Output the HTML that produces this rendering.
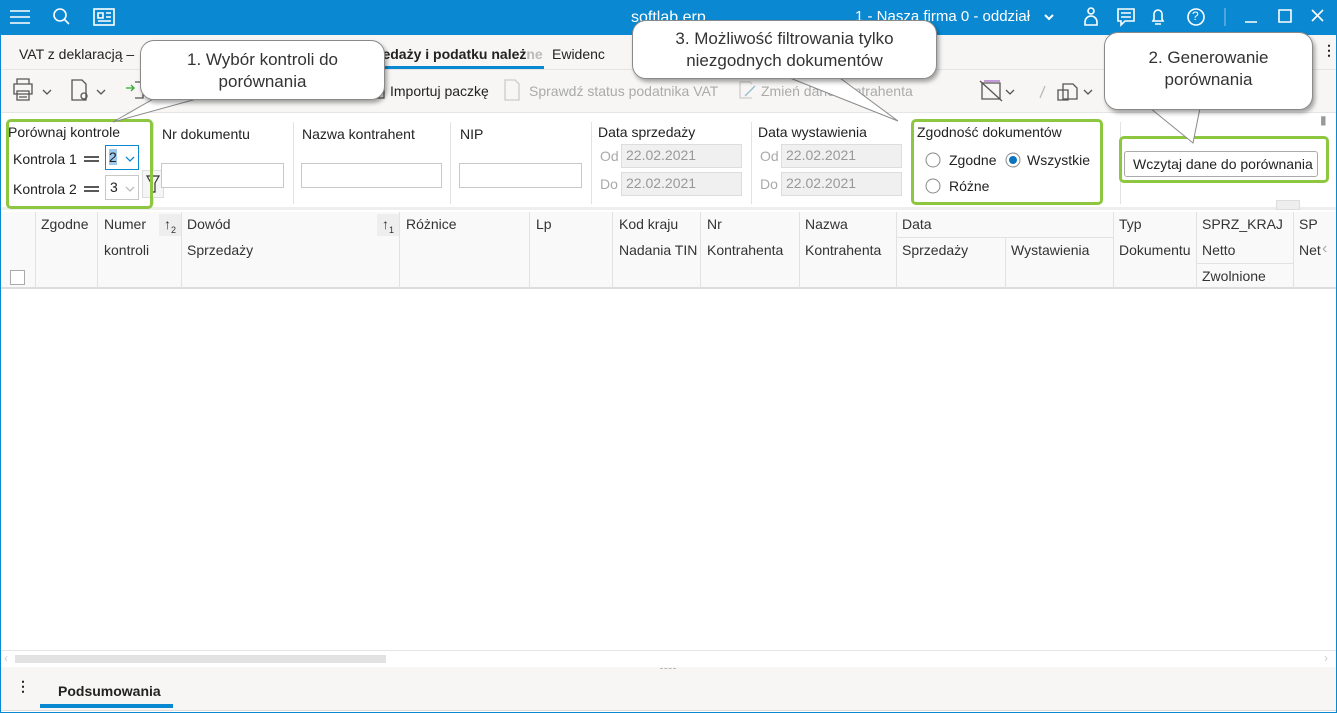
<!DOCTYPE html>
<html><head><meta charset="utf-8"><style>
*{box-sizing:border-box;margin:0;padding:0}
body{width:1337px;height:713px;overflow:hidden;background:#fff;font-family:"Liberation Sans Narrow","Liberation Sans",sans-serif;font-size:14px;color:#222;position:relative}
.a{position:absolute;white-space:nowrap}
.g{color:#aaa}
.inp{position:absolute;border:1px solid #c8c8c8;background:#fff}
.dis{position:absolute;border:1px solid #ddd;background:#f0f0f0;color:#999;padding:2px 4px;font-size:14px}
.green{position:absolute;border:3px solid #8dc63f;border-radius:5px}
.call{position:absolute;background:#fff;border:1px solid #8a8a8a;border-radius:14px;box-shadow:2px 3px 4px rgba(0,0,0,.35);text-align:center;font-family:"Liberation Sans",sans-serif;font-size:17px;color:#333;line-height:22px}
.hd{position:absolute;font-size:14px;color:#333}
.vl{position:absolute;width:1px;background:#e2e2e2}
</style></head><body>
<div class="a" style="left:0;top:0;width:1337px;height:35px;background:#0a89d2"></div>
<svg class="a" style="left:0;top:0" width="1337" height="35" fill="none" stroke="#fff" stroke-width="1.6">
<path d="M10 11h20M10 17h20M10 23h20"/>
<circle cx="60" cy="15" r="6"/><path d="M64 19l5 5"/>
<rect x="94" y="9" width="20" height="16"/><path d="M98 13h5v5h-5zM106 13h5M106 17h5M98 21h13"/>
<path d="M1045 15l4 4 4-4" stroke-width="2"/>
<circle cx="1091" cy="11" r="3"/><path d="M1085 25v-3a6 6 0 0112 0v3z"/>
<path d="M1118 9h16v12h-9l-4 4v-4h-3z M1121 13h10M1121 17h10"/>
<path d="M1155 24h6M1153 21h10l-1-2v-5a4 4 0 00-8 0v5z"/>
<circle cx="1196" cy="17" r="8"/>
<path d="M1245 22h12M1279 10h12v12h-12zM1312 10l11 11M1323 10l-11 11"/>
<path d="M1225 8v18" stroke="#5aaee0"/>
</svg>
<div class="a" style="top:9px;left:1192px;color:#fff;font-size:12px">?</div>
<div class="a" style="left:631px;top:9px;color:#fff;font-size:16px">softlab erp</div>
<div class="a" style="left:855px;top:8px;color:#fff;font-size:15px">1 - Nasza firma 0 - oddział</div>
<div class="a" style="left:0;top:35px;width:1337px;height:678px;border:1px solid #0a89d2;border-top:0"></div>
<div class="a" style="left:1px;top:35px;width:1335px;height:35px;background:#f7f6f5;border-bottom:1px solid #e5e5e5"></div>
<div class="a" style="left:19px;top:46px">VAT z deklaracją –</div>
<div class="a" style="left:370px;top:46px;font-weight:bold">rzedaży i podatku należ<span style="color:#bbb">ne</span></div>
<div class="a" style="left:368px;top:66px;width:176px;height:3px;background:#0a89d2"></div>
<div class="a" style="left:552px;top:46px">Ewidenc</div>
<div class="a" style="left:1322px;top:42px;font-weight:bold">⋮</div>
<div class="a" style="left:1px;top:70px;width:1335px;height:43px;background:#f7f6f5;border-bottom:1px solid #e5e5e5"></div>
<svg class="a" style="left:0;top:70px" width="1337" height="43" fill="none" stroke="#555" stroke-width="1.3">
<path d="M14 14h18v10h-18z M17 14v-5h12v5 M17 21h12v9h-12z M19 24h8M19 27h8"/>
<path d="M43 20l4 4 4-4M97 20l4 4 4-4M1006 20l4 4 4-4M1084 20l4 4 4-4"/>
<path d="M72 10h10l4 4v16h-14z"/><circle cx="84" cy="26" r="3"/>
<path d="M126 18h8M131 15l3 3-3 3" stroke="#3a3"/><path d="M135 12h8v16h-8"/>
<path d="M375 14h9v14h-9z"/>
<path d="M505 10h10l4 4v16h-14z" stroke="#ccc"/>
<path d="M740 12h10l2 2M740 12v16h12" stroke="#ccc"/><path d="M745 26l10-10" stroke="#9bc"/>
<path d="M982 13h18v16h-18z M982 13h18v3" stroke="#555"/><path d="M984 11h16" stroke="#a6c"/><path d="M980 11l22 20"/>
<path d="M1040 28l5-12" stroke="#bbb"/>
<path d="M1063 14h10l4 4v11h-14z M1058 20h10v10h-10z"/>
</svg>
<div class="a" style="left:390px;top:83px">Importuj paczkę</div>
<div class="a g" style="left:529px;top:83px">Sprawdź status podatnika VAT</div>
<div class="a g" style="left:761px;top:83px">Zmień dane kontrahenta</div>
<div class="a" style="left:1px;top:113px;width:1335px;height:97px;background:#fff;border-bottom:3px solid #eee"></div>
<div class="vl" style="left:153px;top:122px;height:82px"></div>
<div class="vl" style="left:293px;top:122px;height:82px"></div>
<div class="vl" style="left:450px;top:122px;height:82px"></div>
<div class="vl" style="left:591px;top:122px;height:82px"></div>
<div class="vl" style="left:751px;top:122px;height:82px"></div>
<div class="vl" style="left:1120px;top:122px;height:82px"></div>
<div class="a" style="left:8px;top:124px">Porównaj kontrole</div>
<div class="a" style="left:13px;top:151px">Kontrola 1</div>
<div class="a" style="left:13px;top:181px">Kontrola 2</div>
<svg class="a" style="left:82px;top:150px" width="20" height="45" stroke="#222" stroke-width="1.5"><path d="M2 7h15M2 11h15M2 37h15M2 41h15"/></svg>
<div class="inp" style="left:105px;top:145px;width:34px;height:25px;border-color:#0a89d2"><span style="position:absolute;left:3px;top:3px;background:#9cc8ee">2</span></div>
<div class="inp" style="left:105px;top:175px;width:34px;height:25px"><span style="position:absolute;left:4px;top:3px">3</span></div>
<svg class="a" style="left:124px;top:154px" width="12" height="40" fill="none" stroke-width="1.3"><path d="M2 3l4 4 4-4" stroke="#0a89d2"/><path d="M2 33l4 4 4-4" stroke="#bbb"/></svg>
<div class="inp" style="left:142px;top:170px;width:22px;height:28px;background:#f5f5f5;border-color:#ddd"></div>
<svg class="a" style="left:145px;top:174px" width="16" height="20" fill="none" stroke="#333" stroke-width="1.2"><path d="M2 2h12l-4 7v9h-4v-9z"/></svg>
<div class="a" style="left:162px;top:126px">Nr dokumentu</div>
<div class="inp" style="left:161px;top:163px;width:123px;height:25px"></div>
<div class="a" style="left:302px;top:126px">Nazwa kontrahent</div>
<div class="inp" style="left:301px;top:163px;width:141px;height:25px"></div>
<div class="a" style="left:460px;top:126px">NIP</div>
<div class="inp" style="left:459px;top:163px;width:123px;height:25px"></div>
<div class="a" style="left:598px;top:124px">Data sprzedaży</div>
<div class="a g" style="left:600px;top:148px">Od</div><div class="dis" style="left:621px;top:144px;width:121px;height:24px">22.02.2021</div>
<div class="a g" style="left:600px;top:176px">Do</div><div class="dis" style="left:621px;top:172px;width:121px;height:24px">22.02.2021</div>
<div class="a" style="left:758px;top:124px">Data wystawienia</div>
<div class="a g" style="left:760px;top:148px">Od</div><div class="dis" style="left:781px;top:144px;width:121px;height:24px">22.02.2021</div>
<div class="a g" style="left:760px;top:176px">Do</div><div class="dis" style="left:781px;top:172px;width:121px;height:24px">22.02.2021</div>
<div class="a" style="left:917px;top:124px">Zgodność dokumentów</div>
<svg class="a" style="left:920px;top:148px" width="110" height="50"><circle cx="13" cy="12" r="7" fill="#fff" stroke="#888"/><circle cx="93" cy="12" r="7" fill="#fff" stroke="#888"/><circle cx="93" cy="12" r="4" fill="#0a74c0"/><circle cx="13" cy="38" r="7" fill="#fff" stroke="#888"/></svg>
<div class="a" style="left:949px;top:152px">Zgodne</div>
<div class="a" style="left:1027px;top:152px">Wszystkie</div>
<div class="a" style="left:949px;top:178px">Różne</div>
<div class="a" style="left:1124px;top:151px;width:194px;height:26px;border:1px solid #aaa;border-radius:3px;background:#fff;padding:4px 8px;overflow:hidden">Wczytaj dane do porównania</div>
<div class="a" style="left:1320px;top:113px;color:#999;font-size:12px">▮</div>
<div class="a" style="left:1276px;top:200px;width:24px;height:10px;background:#eee;border:1px solid #ddd"></div>
<div class="a" style="left:1px;top:212px;width:1335px;height:77px;background:#f9f9f9;border-bottom:2px solid #ddd"></div>
<div class="vl" style="left:35px;top:212px;height:77px"></div>
<div class="vl" style="left:97px;top:212px;height:77px"></div>
<div class="vl" style="left:181px;top:212px;height:77px"></div>
<div class="vl" style="left:399px;top:212px;height:77px"></div>
<div class="vl" style="left:529px;top:212px;height:77px"></div>
<div class="vl" style="left:612px;top:212px;height:77px"></div>
<div class="vl" style="left:700px;top:212px;height:77px"></div>
<div class="vl" style="left:799px;top:212px;height:77px"></div>
<div class="vl" style="left:896px;top:212px;height:77px"></div>
<div class="vl" style="left:1005px;top:238px;height:51px"></div>
<div class="vl" style="left:1113px;top:212px;height:77px"></div>
<div class="vl" style="left:1196px;top:212px;height:77px"></div>
<div class="vl" style="left:1293px;top:212px;height:77px"></div>
<div class="a" style="left:897px;top:237px;width:216px;height:1px;background:#e2e2e2"></div>
<div class="a" style="left:1197px;top:263px;width:96px;height:1px;background:#e2e2e2"></div>
<div class="a" style="left:10px;top:270px;width:15px;height:15px;border:1px solid #aaa;background:#fff"></div>
<div class="a" style="left:159px;top:214px;width:22px;height:22px;background:#eee"></div>
<div class="a" style="left:377px;top:214px;width:22px;height:22px;background:#eee"></div>
<div class="hd" style="left:164px;top:216px">↑<sub style="font-size:9px">2</sub></div>
<div class="hd" style="left:382px;top:216px">↑<sub style="font-size:9px">1</sub></div>
<div class="hd" style="left:41px;top:216px">Zgodne</div>
<div class="hd" style="left:104px;top:216px">Numer</div><div class="hd" style="left:104px;top:242px">kontroli</div>
<div class="hd" style="left:187px;top:216px">Dowód</div><div class="hd" style="left:187px;top:242px">Sprzedaży</div>
<div class="hd" style="left:406px;top:216px">Różnice</div>
<div class="hd" style="left:536px;top:216px">Lp</div>
<div class="hd" style="left:619px;top:216px">Kod kraju</div><div class="hd" style="left:619px;top:242px">Nadania TIN</div>
<div class="hd" style="left:707px;top:216px">Nr</div><div class="hd" style="left:707px;top:242px">Kontrahenta</div>
<div class="hd" style="left:805px;top:216px">Nazwa</div><div class="hd" style="left:805px;top:242px">Kontrahenta</div>
<div class="hd" style="left:902px;top:216px">Data</div><div class="hd" style="left:902px;top:242px">Sprzedaży</div><div class="hd" style="left:1011px;top:242px">Wystawienia</div>
<div class="hd" style="left:1119px;top:216px">Typ</div><div class="hd" style="left:1119px;top:242px">Dokumentu</div>
<div class="hd" style="left:1202px;top:216px">SPRZ_KRAJ</div><div class="hd" style="left:1202px;top:242px">Netto</div><div class="hd" style="left:1202px;top:268px">Zwolnione</div>
<div class="hd" style="left:1299px;top:216px">SP</div><div class="hd" style="left:1299px;top:242px">Net</div>
<div class="a" style="left:1322px;top:240px;color:#aaa;font-size:16px">‹</div>
<div class="a" style="left:1px;top:650px;width:1335px;height:17px;border-top:1px solid #e5e5e5;background:#fff"></div>
<div class="a" style="left:15px;top:655px;width:371px;height:8px;background:#e2e2e2"></div>
<div class="a" style="left:4px;top:651px;color:#ccc;font-size:12px">‹</div>
<div class="a" style="left:1324px;top:651px;color:#ccc;font-size:12px">›</div>
<div class="a" style="left:1px;top:667px;width:1335px;height:44px;background:#f7f6f5;border-bottom:1px solid #ddd"></div>
<div class="a" style="left:660px;top:668px;width:16px;height:2px;border-top:1px dashed #bbb"></div>
<div class="a" style="left:16px;top:678px;font-weight:bold">⋮</div>
<div class="a" style="left:58px;top:683px;font-weight:bold">Podsumowania</div>
<div class="a" style="left:40px;top:704px;width:133px;height:4px;background:#0a89d2"></div>
<div class="green" style="left:6px;top:119px;width:147px;height:90px"></div>
<div class="green" style="left:911px;top:119px;width:192px;height:86px"></div>
<div class="green" style="left:1119px;top:136px;width:210px;height:47px"></div>
<svg class="a" style="left:0;top:0" width="1337" height="200">
<path d="M155 98L113 122L200 98" fill="#fff" stroke="#8a8a8a"/>
<path d="M790 78L898 121L840 78" fill="#fff" stroke="#8a8a8a"/>
<path d="M1150 108L1193 143L1200 108" fill="#fff" stroke="#8a8a8a"/>
</svg>
<div class="call" style="left:140px;top:40px;width:245px;height:60px;padding-top:8px">1. Wybór kontroli do<br>porównania</div>
<div class="call" style="left:632px;top:20px;width:305px;height:59px;padding-top:7px">3. Możliwość filtrowania tylko<br>niezgodnych dokumentów</div>
<div class="call" style="left:1104px;top:32px;width:209px;height:78px;padding-top:14px">2. Generowanie<br>porównania</div>
</body></html>
